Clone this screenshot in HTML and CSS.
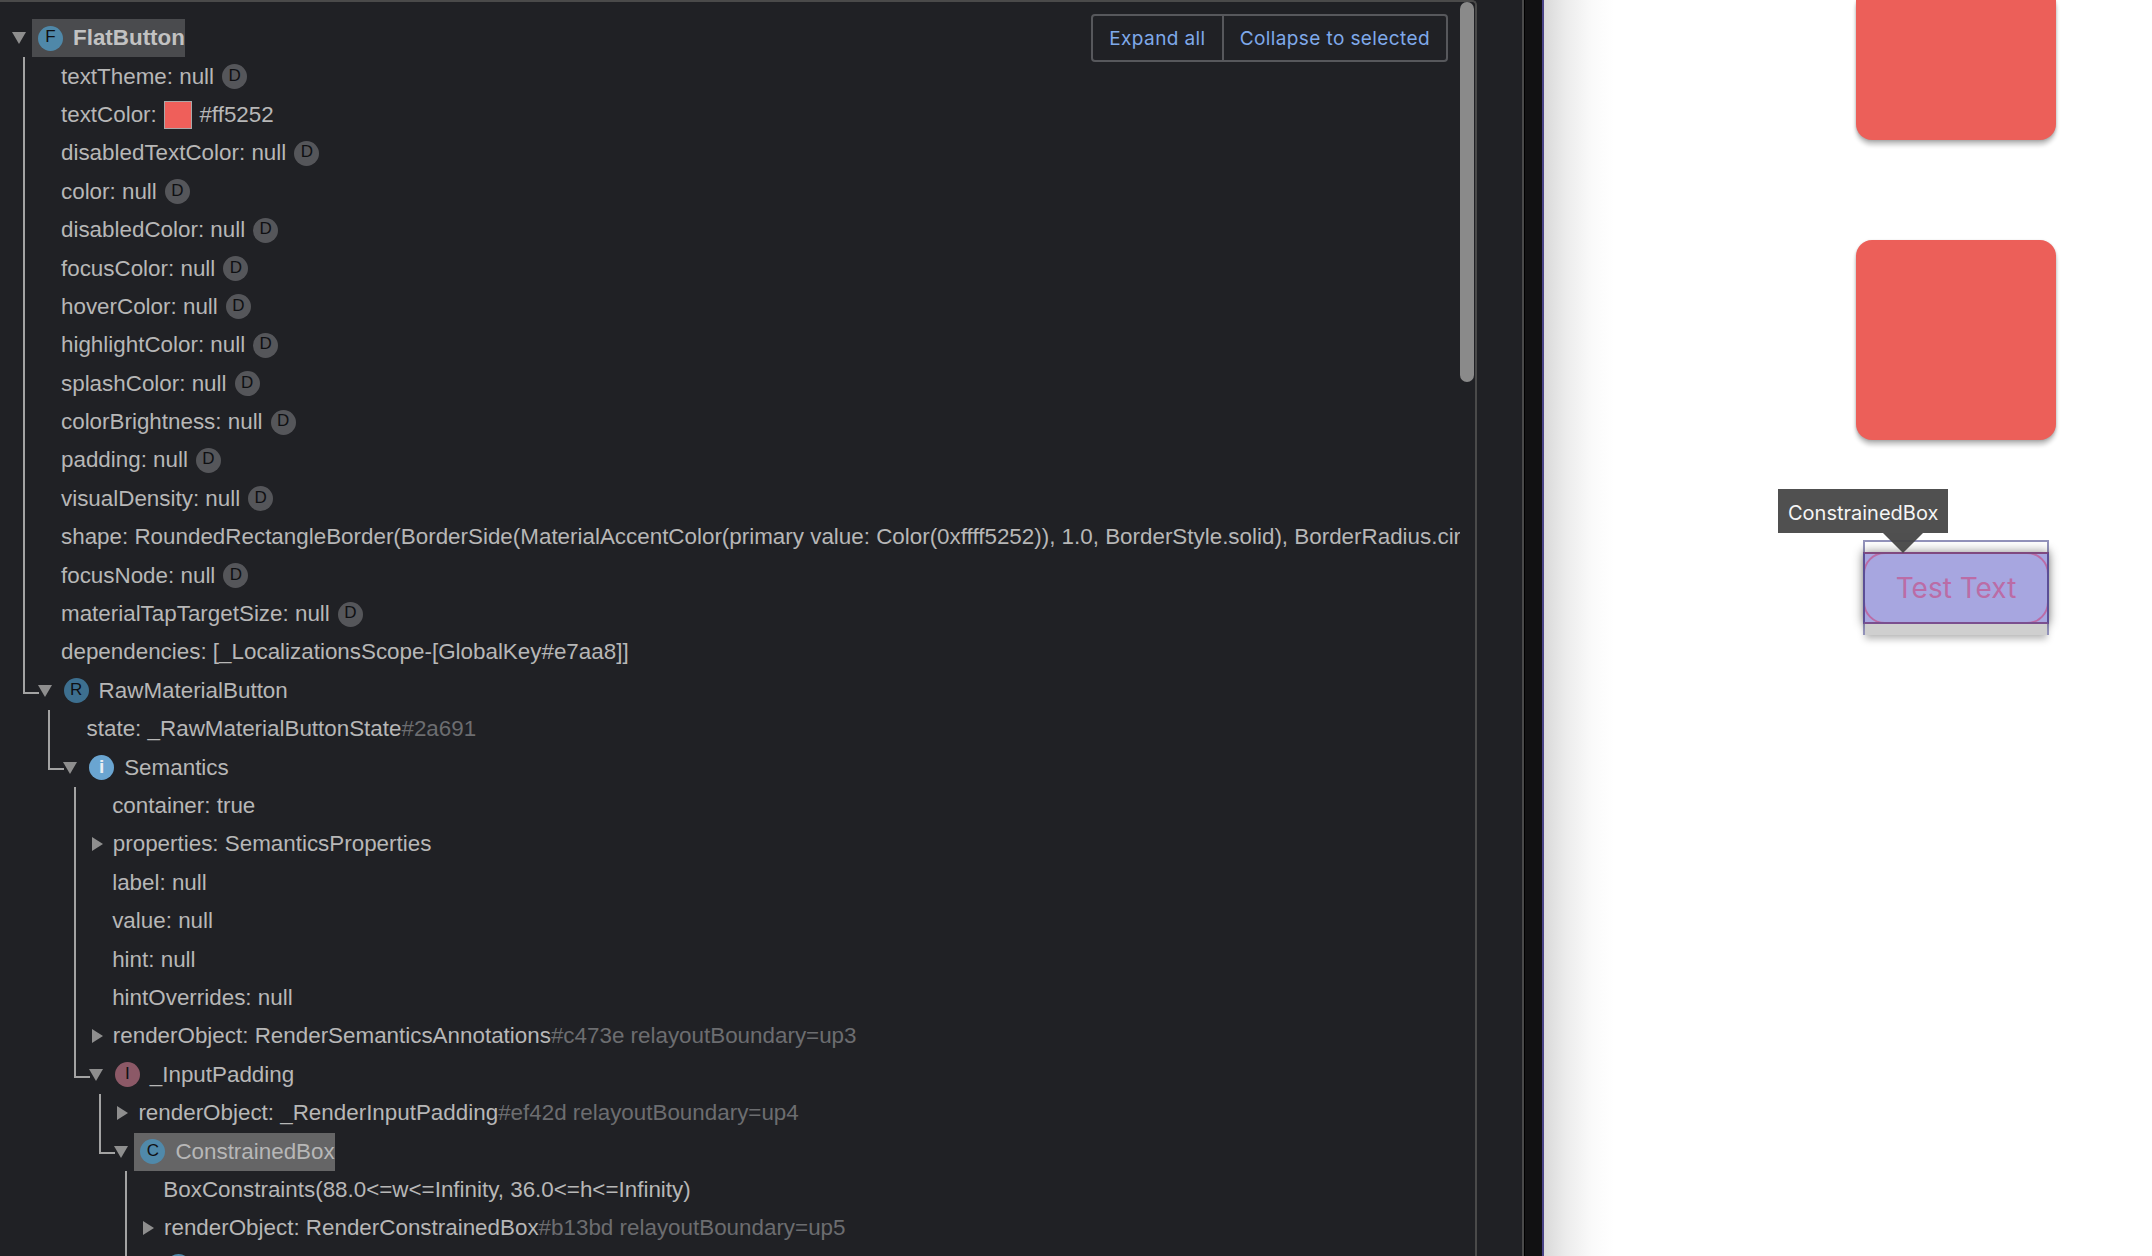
FILE: index.html
```html
<!DOCTYPE html>
<html lang="en">
<head>
<meta charset="utf-8">
<title>Flutter Inspector</title>
<link rel="stylesheet" href="styles.css">
</head>
<body>
<div class="app">
  <section class="inspector">
    <div class="details">
      <div class="tree">
        <div class="item root">
          <div class="row node"><i class="arrow-down"></i><span class="label selected"><b class="icon icon-f">F</b><span class="name strong">FlatButton</span></span></div>
          <div class="children">
            <div class="item"><div class="row prop">textTheme: null<b class="badge">D</b></div></div>
            <div class="item"><div class="row prop">textColor:<i class="swatch"></i>#ff5252</div></div>
            <div class="item"><div class="row prop">disabledTextColor: null<b class="badge">D</b></div></div>
            <div class="item"><div class="row prop">color: null<b class="badge">D</b></div></div>
            <div class="item"><div class="row prop">disabledColor: null<b class="badge">D</b></div></div>
            <div class="item"><div class="row prop">focusColor: null<b class="badge">D</b></div></div>
            <div class="item"><div class="row prop">hoverColor: null<b class="badge">D</b></div></div>
            <div class="item"><div class="row prop">highlightColor: null<b class="badge">D</b></div></div>
            <div class="item"><div class="row prop">splashColor: null<b class="badge">D</b></div></div>
            <div class="item"><div class="row prop">colorBrightness: null<b class="badge">D</b></div></div>
            <div class="item"><div class="row prop">padding: null<b class="badge">D</b></div></div>
            <div class="item"><div class="row prop">visualDensity: null<b class="badge">D</b></div></div>
            <div class="item"><div class="row prop">shape: RoundedRectangleBorder(BorderSide(MaterialAccentColor(primary value: Color(0xffff5252)), 1.0, BorderStyle.solid), BorderRadius.cir</div></div>
            <div class="item"><div class="row prop">focusNode: null<b class="badge">D</b></div></div>
            <div class="item"><div class="row prop">materialTapTargetSize: null<b class="badge">D</b></div></div>
            <div class="item"><div class="row prop">dependencies: [_LocalizationsScope-[GlobalKey#e7aa8]]</div></div>
            <div class="item">
              <div class="row node"><i class="arrow-down"></i><span class="label"><b class="icon icon-r">R</b><span class="name">RawMaterialButton</span></span></div>
              <div class="children">
                <div class="item"><div class="row prop">state: _RawMaterialButtonState<span class="dim">#2a691</span></div></div>
                <div class="item">
                  <div class="row node"><i class="arrow-down"></i><span class="label"><b class="icon icon-i">i</b><span class="name">Semantics</span></span></div>
                  <div class="children">
                    <div class="item"><div class="row prop">container: true</div></div>
                    <div class="item"><div class="row collapsed"><i class="arrow-right"></i>properties: SemanticsProperties</div></div>
                    <div class="item"><div class="row prop">label: null</div></div>
                    <div class="item"><div class="row prop">value: null</div></div>
                    <div class="item"><div class="row prop">hint: null</div></div>
                    <div class="item"><div class="row prop">hintOverrides: null</div></div>
                    <div class="item"><div class="row collapsed"><i class="arrow-right"></i>renderObject: RenderSemanticsAnnotations<span class="dim">#c473e relayoutBoundary=up3</span></div></div>
                    <div class="item">
                      <div class="row node"><i class="arrow-down"></i><span class="label"><b class="icon icon-p">I</b><span class="name">_InputPadding</span></span></div>
                      <div class="children">
                        <div class="item"><div class="row collapsed"><i class="arrow-right"></i>renderObject: _RenderInputPadding<span class="dim">#ef42d relayoutBoundary=up4</span></div></div>
                        <div class="item">
                          <div class="row node"><i class="arrow-down"></i><span class="label current"><b class="icon icon-c">C</b><span class="name">ConstrainedBox</span></span></div>
                          <div class="children">
                            <div class="item"><div class="row prop">BoxConstraints(88.0&lt;=w&lt;=Infinity, 36.0&lt;=h&lt;=Infinity)</div></div>
                            <div class="item"><div class="row collapsed"><i class="arrow-right"></i>renderObject: RenderConstrainedBox<span class="dim">#b13bd relayoutBoundary=up5</span></div></div>
                            <div class="item">
                              <div class="row node"><i class="arrow-blank"></i><span class="label"><b class="icon icon-c"></b></span></div>
                            </div>
                            <div class="item"><div class="row prop"></div></div>
                          </div>
                        </div>
                      </div>
                    </div>
                  </div>
                </div>
              </div>
            </div>
          </div>
        </div>
      </div>
      <div class="scrollbar"><div class="thumb"></div></div>
      <div class="actions">
        <button class="action" type="button">Expand all</button>
        <button class="action" type="button">Collapse to selected</button>
      </div>
    </div>
    <div class="gutter"></div>
  </section>
  <div class="divider"></div>
  <section class="preview">
    <div class="card card-cut"></div>
    <div class="card card-full"></div>
    <div class="inspect">
      <div class="tooltip">ConstrainedBox</div>
      <div class="constrained"><div class="test-button">Test Text</div></div>
      <div class="strip"></div>
    </div>
  </section>
</div>
</body>
</html>
```
FILE: styles.css
```css
* { box-sizing: border-box; }
html, body { margin: 0; height: 100%; overflow: hidden; }
body { background: #202125; font-family: "Liberation Sans", Arial, sans-serif; }

.app { display: flex; width: 2152px; height: 1256px; }

/* Inspector panel */
.inspector { display: flex; width: 1524px; flex: none; background: #202125; border-right: 2px solid #4a4a4a; }
.details { position: relative; display: flex; width: 1477px; flex: none; height: 100%; padding-top: 2px; border-top: 2px solid #4a4a4a; border-right: 2px solid #4a4a4a; border-top-right-radius: 5px; }
.gutter { flex: 1; }

.tree { width: 1460px; height: 100%; flex: none; padding-top: 15px; overflow: hidden; color: #b7b7b7; font-size: 22.4px; }
.root { margin-left: -3px; }
.children { margin-left: 25.6px; }
.item { position: relative; }
.item:not(:last-child)::before { content: ""; position: absolute; left: 0; top: 0; bottom: 0; width: 2px; background: #a3a3a3; }
.root .children > .item:last-child > .row::before { content: ""; position: absolute; left: 0; top: 0; width: 14px; height: 20px; border-left: 2px solid #a3a3a3; border-bottom: 2px solid #a3a3a3; }

.row { position: relative; display: flex; align-items: center; height: 38.4px; white-space: nowrap; }
.prop { padding-left: 38.4px; }
.collapsed { padding-left: 18px; }
.node { padding-left: 15px; }

.arrow-down { flex: none; width: 0; height: 0; margin-right: 6px; border-left: 7px solid transparent; border-right: 7px solid transparent; border-top: 12px solid #8e8e8e; }
.arrow-blank { flex: none; width: 14px; margin-right: 6px; }
.arrow-right { flex: none; width: 0; height: 0; margin-right: 10px; border-top: 7px solid transparent; border-bottom: 7px solid transparent; border-left: 11px solid #8e8e8e; }

.label { display: flex; align-items: center; height: 38px; padding-left: 6px; }
.selected { background: #4a4b4e; }
.current { background: #656566; }
.name { margin-left: 10px; }
.strong { font-weight: 700; color: #c2c2c2; }

.icon, .badge { display: flex; flex: none; align-items: center; justify-content: center; width: 25px; height: 25px; padding-bottom: 2px; border-radius: 50%; color: #0f1013; font-size: 17px; font-weight: 400; }
.icon-f { background: #4f88a9; }
.icon-r { background: #3d6f8f; }
.icon-i { background: #6aa5d1; color: #e8eef3; font-weight: 700; font-size: 19px; }
.icon-p { background: #8c5967; }
.icon-c { background: #5089aa; }
.badge { margin-left: 8px; background: #55565a; }

.swatch { flex: none; width: 28px; height: 28px; margin: 0 7px 0 7.6px; background: #ef5f5a; border: 1px solid #a8a8a8; }
.dim { color: #6c6d70; }

.scrollbar { flex: 1; }
.thumb { width: 14px; height: 380px; background: #8a8a8a; border-radius: 7px; margin-top: -2px; }

.actions { position: absolute; top: 12px; right: 27px; display: flex; height: 48px; border: 2px solid #57585c; border-radius: 4px; background: #202125; }
.action { display: block; margin: 0; padding: 0 16px; border: 0; background: none; color: #7fa9ea; font-family: Inter, "Liberation Sans", sans-serif; font-size: 19px; letter-spacing: .4px; white-space: nowrap; }
.action + .action { border-left: 2px solid #57585c; }

/* Divider */
.divider { width: 20px; flex: none; background: #111112; border-left: 1px solid #000; border-right: 2px solid #4a4488; }

/* Device preview */
.preview { position: relative; display: flex; flex: 1; flex-direction: column; align-items: flex-end; padding-right: 96px; overflow: hidden; background: linear-gradient(90deg, #d9d9d9 0, #ececec 22px, #fafafa 48px, #fff 70px); }
.card { width: 200px; background: #ec5f59; box-shadow: 0 5px 4px rgba(0, 0, 0, .22), 0 1px 3px rgba(0, 0, 0, .2); }
.card-cut { height: 140px; border-radius: 0 0 16px 16px; }
.card-full { height: 200px; margin-top: 100px; border-radius: 16px; }

.inspect { position: relative; width: 186px; height: 95px; margin: 100px 7px 0 0; padding-top: 10px; background: #fff; border: 2px solid #9393bb; box-shadow: 0 6px 7px -2px rgba(0, 0, 0, .28); }
.constrained { position: relative; height: 72px; margin: 0 -2px; background: #a7a6e0; box-shadow: 0 0 10px rgba(0, 0, 0, .45); }
.constrained::after { content: ""; position: absolute; inset: 0; border: solid #5a4e96; border-width: 2px; border-top-color: #80497f; border-bottom-color: #7b4f8f; }
.test-button { display: flex; align-items: center; justify-content: center; height: 72px; border: 2px solid #bb6ca6; border-radius: 22px; color: #bb6ca6; font-family: Inter, "Liberation Sans", sans-serif; font-size: 28px; }
.strip { position: relative; height: 11px; background: #cfcfcf; }

.tooltip { position: absolute; left: -87px; top: -53px; z-index: 2; display: flex; align-items: center; width: 170px; height: 44px; padding: 3px 0 0 10px; background: #505050; color: #f5f5f5; font-family: Inter, "Liberation Sans", sans-serif; font-size: 20px; white-space: nowrap; }
.tooltip::after { content: ""; position: absolute; left: 105px; top: 44px; border-left: 20px solid transparent; border-right: 20px solid transparent; border-top: 20px solid rgba(70, 70, 70, .95); }
```
